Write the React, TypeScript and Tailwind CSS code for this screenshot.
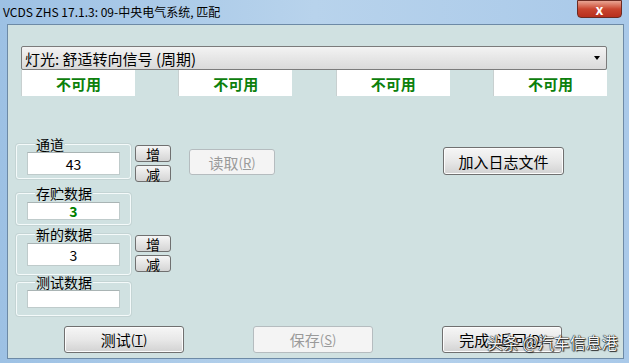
import React from 'react';

const FONT = { fontFamily: '"Noto Sans CJK SC", "Liberation Sans", sans-serif' };

function Btn({ label, hot, rest, className = '', disabled = false }: { label: string; hot?: string; rest?: string; className?: string; disabled?: boolean }) {
  return (
    <button
      className={`flex items-center justify-center rounded-[3px] border text-[15px] leading-none
        ${disabled
          ? 'border-[#b5bcbf] bg-[#f4f4f4] text-[#9a9a9a]'
          : 'border-[#707070] bg-gradient-to-b from-[#f6f6f6] via-[#e8e8e8] to-[#d2d2d2] text-black shadow-[inset_0_0_0_1px_#fcfcfc]'}
        ${className}`}
    >
      {label}
      {hot && (
        <span className="text-[13px]">
          (<span className="underline">{hot}</span>){rest}
        </span>
      )}
    </button>
  );
}

function SmallBtn({ label }: { label: string }) {
  return (
    <button className="flex h-[17px] w-[36px] items-center justify-center rounded-[3px] border border-[#707070] bg-gradient-to-b from-[#f6f6f6] to-[#d4d4d4] text-[14px] leading-none text-black">
      {label}
    </button>
  );
}

function Group({ title, children, className = '' }: { title: string; children: React.ReactNode; className?: string }) {
  return (
    <fieldset className={`w-[114px] rounded-[3px] border border-[#f4fafa] shadow-[0_0_0_1px_#c4d4d4] px-[10px] ${className}`}>
      <legend className="ml-[8px] px-[1px] text-[14px] leading-[16px] text-black">{title}</legend>
      {children}
    </fieldset>
  );
}

function Field({ value, h, green = false }: { value: string; h: string; green?: boolean }) {
  return (
    <div className={`flex ${h} w-[93px] items-center justify-center border border-[#bfcbcb] border-t-[#a9b4b4] bg-white text-[14px] leading-none
      ${green ? 'font-bold text-[#008000]' : 'text-black'}`}>
      {value}
    </div>
  );
}

export default function App() {
  return (
    <div className="relative flex h-[363px] w-[629px] flex-col overflow-hidden bg-gradient-to-r from-[#9dc1e4] via-[#b8d3ec] to-[#a9c9e9]" style={FONT}>
      {/* title bar */}
      <div className="flex h-[24px] items-center justify-between pl-[3px]">
        <span className="text-[12px] text-black">VCDS ZHS 17.1.3: 09-中央电气系统, 匹配</span>
        <div className="mr-[7px] mb-[6px] flex h-[18px] w-[45px] items-center justify-center rounded-b-[4px] border border-[#6b2b22] bg-gradient-to-b from-[#e8a493] via-[#c9452f] to-[#b7301c]">
          <span className="text-[14px] font-bold leading-none text-white">x</span>
        </div>
      </div>

      {/* client area */}
      <div className="ml-[7px] mr-[5px] mb-[4px] flex flex-1 flex-col border border-[#6d8aa6] bg-[#d0e1e1]">
        {/* dropdown */}
        <div className="ml-[13px] mt-[21px] flex h-[24px] w-[586px] items-center justify-between rounded-[2px] border border-[#7b7b7b] bg-gradient-to-b from-[#f3f3f3] to-[#dadada] pl-[3px] pr-[6px]">
          <span className="text-[15px] leading-none text-black">灯光: 舒适转向信号 (周期)</span>
          <span className="h-0 w-0 border-x-[3.5px] border-t-[4px] border-x-transparent border-t-black" />
        </div>

        {/* status boxes */}
        <div className="ml-[13px] flex w-[586px] justify-between">
          {[0, 1, 2, 3].map((i) => (
            <div key={i} className="flex h-[26px] w-[114px] items-center justify-center border-l border-[#c8d0d0] bg-white text-[15px] font-bold leading-none text-[#0c800c]">
              不可用
            </div>
          ))}
        </div>

        {/* middle */}
        <div className="ml-[8px] mt-[40px] flex flex-col">
          <div className="flex items-start">
            <Group title="通道" className="pb-[3px]">
              <Field value="43" h="h-[23px]" />
            </Group>
            <div className="ml-[4px] mt-[9px] flex flex-col gap-[3px]">
              <SmallBtn label="增" />
              <SmallBtn label="减" />
            </div>
            <Btn label="读取" hot="R" disabled className="ml-[18px] mt-[13px] h-[26px] w-[86px]" />
            <Btn label="加入日志文件" className="ml-[168px] mt-[11px] h-[28px] w-[121px]" />
          </div>

          <Group title="存贮数据" className="mt-[3px] pt-[1px] pb-[4px]">
            <Field value="3" h="h-[18px]" green />
          </Group>

          <div className="flex items-start">
            <Group title="新的数据" className="mt-[1px] pt-[1px] pb-[8px]">
              <Field value="3" h="h-[23px]" />
            </Group>
            <div className="ml-[4px] mt-[10px] flex flex-col gap-[3px]">
              <SmallBtn label="增" />
              <SmallBtn label="减" />
            </div>
          </div>

          <Group title="测试数据" className="-mt-[1px] pb-[7px]">
            <Field value="" h="h-[18px]" />
          </Group>
        </div>

        {/* bottom buttons */}
        <div className="ml-[56px] mt-[10px] flex gap-[69px]">
          <Btn label="测试" hot="T" className="h-[27px] w-[120px]" />
          <Btn label="保存" hot="S" disabled className="h-[27px] w-[120px]" />
          <Btn label="完成, 返回" hot="D" className="h-[27px] w-[120px]" />
        </div>
      </div>

      {/* watermark */}
      <div className="absolute left-[487px] top-[332px] text-[16px] leading-[20px] text-[#f4f4f4] [text-shadow:0_0_1px_#000,0_0_1px_#000,1px_1px_1px_#333]">
        头条 @汽车信息港
      </div>
    </div>
  );
}
